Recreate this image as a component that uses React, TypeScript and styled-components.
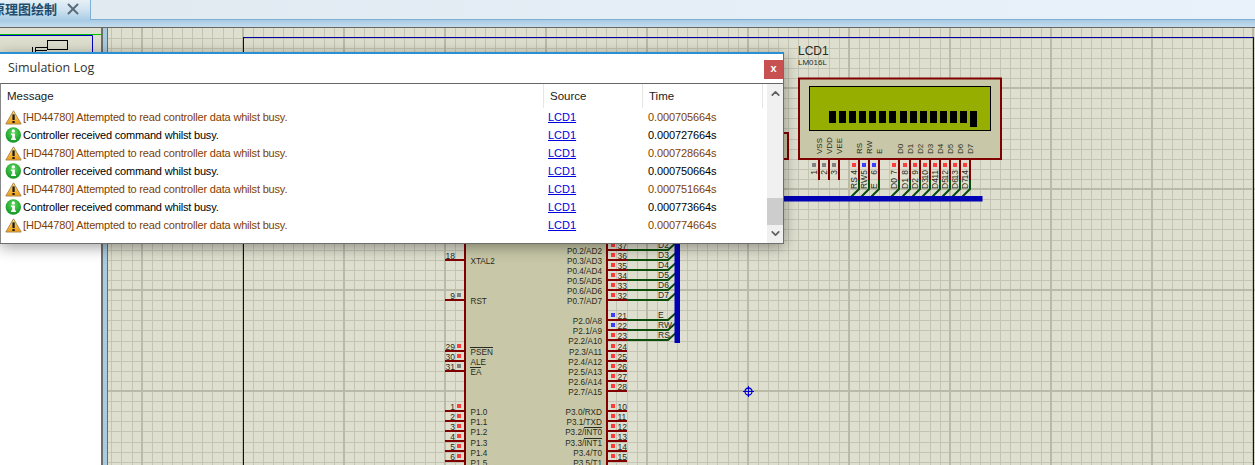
import React from "react";
import styled, { createGlobalStyle } from "styled-components";
import { ChevronDown, ChevronUp, X } from "lucide-react";

const Global = createGlobalStyle`
  html, body { margin: 0; padding: 0; background: #fff; overflow: hidden; }
  * { box-sizing: border-box; }
`;

const Root = styled.div`
  position: relative;
  width: 1255px;
  height: 465px;
  overflow: hidden;
  display: flex;
  flex-direction: column;
  font-family: "Liberation Sans", Arial, sans-serif;
`;

const TabBar = styled.div`
  display: flex;
  height: 20px;
  flex: none;
`;

const ActiveTab = styled.div`
  width: 91px;
  display: flex;
  align-items: center;
  overflow: hidden;
  background: linear-gradient(#e6f0f7, #cfe2f0 50%, #a9cde6);
  border-right: 1px solid #7fb0d4;
`;

const TabTitle = styled.span`
  flex: none;
  margin-left: -8px;
  margin-top: -3px;
  width: 65px;
  font: bold 13px "Noto Sans CJK SC", sans-serif;
  color: #1f4d70;
  white-space: nowrap;
`;

const TabClose = styled.span`
  display: flex;
  margin-left: 7px;
  margin-top: -2px;
  color: #5b6b78;
`;

const TabFill = styled.div`
  flex: 1;
  background: linear-gradient(90deg, #e1e9f1, #e9f2fa);
  border-bottom: 1px solid #7fb0d4;
`;

const Strip = styled.div`
  height: 7px;
  flex: none;
  background: linear-gradient(#a6cae4, #c6dcec);
`;

const Workspace = styled.div`
  flex: 1;
  display: flex;
  min-height: 0;
  border-top: 1px solid #666;
`;

const SidePanel = styled.div`
  width: 103px;
  flex: none;
  background: #fff;
  border-right: 2px solid #6e6e6e;
`;

const Preview = styled.svg`
  display: block;
  width: 101px;
  height: 26px;
  background: #dfdfcf;
`;

const Splitter = styled.div`
  width: 5px;
  flex: none;
  background: #a9cbe0;
  border-right: 1px solid #6e6e6e;
`;

const Canvas = styled.svg`
  flex: 1;
  display: block;
  height: 437px;
  background: #dfdfcf;
`;

const SheetText = styled.text<{ $size?: number; $fill?: string; $anchor?: string }>`
  font-family: "Liberation Sans", Arial, sans-serif;
  font-size: ${(p) => p.$size ?? 8.2}px;
  fill: ${(p) => p.$fill ?? "#2a2a20"};
  text-anchor: ${(p) => p.$anchor ?? "start"};
`;

const Dialog = styled.div`
  position: absolute;
  left: 0;
  top: 52px;
  width: 784px;
  height: 192px;
  background: #fff;
  border-top: 2px solid #2b8fd3;
  border-right: 1px solid #6e6e6e;
  border-bottom: 1px solid #6e6e6e;
  box-shadow: 0 3px 14px rgba(0, 0, 0, 0.38);
  display: flex;
  flex-direction: column;
`;

const TitleBar = styled.div`
  height: 29px;
  flex: none;
  display: flex;
  align-items: center;
  justify-content: space-between;
  padding-left: 8px;
`;

const Title = styled.span`
  margin-bottom: 3px;
  font: 12.5px "Open Sans", sans-serif;
  color: #333;
`;

const CloseButton = styled.button`
  align-self: flex-start;
  width: 19px;
  height: 19px;
  margin-top: 6px;
  border: 0;
  padding: 0 0 3px;
  background: #c75050;
  color: #fff;
  font: bold 11px "Liberation Sans", sans-serif;
`;

const ListBox = styled.div`
  flex: 1;
  display: flex;
  min-height: 0;
  border-top: 1px solid #666;
  border-left: 1px solid #888;
`;

const ListMain = styled.div`
  width: 765px;
  flex: none;
`;

const Columns = styled.div`
  display: grid;
  grid-template-columns: 543px 99px 120px;
`;

const HeaderRow = styled(Columns)`
  height: 24px;
`;

const HeaderCell = styled.div`
  padding-left: 6px;
  line-height: 24px;
  font-size: 11.5px;
  color: #1a1a1a;
  border-right: 1px solid #e6e6e6;
`;

const Row = styled(Columns)<{ $warn: boolean }>`
  height: 18px;
  line-height: 18px;
  font-size: 11px;
  color: ${(p) => (p.$warn ? "#7f4000" : "#000")};
`;

const MessageCell = styled.div`
  display: flex;
  align-items: center;
  gap: 1px;
  padding-left: 4px;
  white-space: nowrap;
  letter-spacing: -0.18px;
`;

const SourceLink = styled.a`
  padding-left: 4px;
  color: #0000e0;
  text-decoration: underline;
`;

const TimeCell = styled.div`
  padding-left: 5px;
  letter-spacing: -0.12px;
`;

const Scrollbar = styled.div`
  width: 16px;
  margin-left: 1px;
  background: #f0f0f0;
  display: flex;
  flex-direction: column;
  align-items: center;
  justify-content: space-between;
  position: relative;
  padding: 3px 0;
  color: #606060;
`;

const Thumb = styled.div`
  position: absolute;
  left: 0;
  right: 0;
  top: 114px;
  height: 27px;
  background: #cdcdcd;
`;

const WarnIcon = () => (
  <svg width="17" height="15" viewBox="0 0 17 15">
    <defs>
      <linearGradient id="warnFill" x1="0" y1="0" x2="0" y2="1">
        <stop offset="0" stopColor="#ffe27a" />
        <stop offset="1" stopColor="#f09a10" />
      </linearGradient>
    </defs>
    <path d="M8.5 0.8 L16.2 14 H0.8 Z" fill="url(#warnFill)" stroke="#b08a50" strokeLinejoin="round" />
    <rect x="7.4" y="4.4" width="2.3" height="5.6" fill="#1a1a1a" />
    <rect x="7.4" y="11" width="2.3" height="2" fill="#1a1a1a" />
  </svg>
);

const InfoIcon = () => (
  <svg width="17" height="16" viewBox="0 0 17 16">
    <defs>
      <radialGradient id="infoFill" cx="0.5" cy="0.35" r="0.7">
        <stop offset="0" stopColor="#5fdc5f" />
        <stop offset="1" stopColor="#0a8f1e" />
      </radialGradient>
    </defs>
    <circle cx="8.3" cy="8" r="7.7" fill="url(#infoFill)" />
    <circle cx="8.3" cy="3.9" r="1.7" fill="#fff" />
    <path d="M6 6.5 H9.9 V11.6 H11 V13 H6 V11.6 H7.2 V7.9 H6 Z" fill="#fff" />
  </svg>
);

const logRows = [
  [true, "0.000705664s"],
  [false, "0.000727664s"],
  [true, "0.000728664s"],
  [false, "0.000750664s"],
  [true, "0.000751664s"],
  [false, "0.000773664s"],
  [true, "0.000774664s"],
] as const;

const range = (from: number, to: number, step: number) => {
  const out: number[] = [];
  for (let v = from; v <= to; v += step) out.push(v);
  return out;
};

const GRID = "#c4c4b4";
const GRID_MAJOR = "#babaa9";
const PIN = "#800000";
const WIRE = "#0a4d0a";
const BUS = "#0000b4";
const RED = "#ff3c3c";
const BLUE = "#3c3cff";
const GRAY = "#808080";

const xMinor = range(0, 113, 1).map((k) => Math.round(141.7 + (k - 3) * 10.1));
const yMinor = range(0, 43, 1).map((k) => Math.round(37.5 + (k - 1) * 10.1));
const xMajor = [0, 1, 2, 3, 4, 5, 6, 7, 8, 9, 10, 11].map((k) => Math.round(141.7 + k * 101));
const yMajor = [0, 1, 2, 3, 4].map((k) => Math.round(88 + k * 101));

const Grid = () => (
  <g shapeRendering="crispEdges">
    {xMinor.map((x) => (
      <line key={x} x1={x + 0.5} x2={x + 0.5} y1={28} y2={465} stroke={GRID} />
    ))}
    {yMinor.map((y) => (
      <line key={y} y1={y + 0.5} y2={y + 0.5} x1={108} x2={1255} stroke={GRID} />
    ))}
    {xMajor.map((x) => (
      <line key={x} x1={x} x2={x} y1={28} y2={465} stroke={GRID_MAJOR} strokeWidth={2} />
    ))}
    {yMajor.map((y) => (
      <line key={y} y1={y} y2={y} x1={108} x2={1255} stroke={GRID_MAJOR} strokeWidth={2} />
    ))}
  </g>
);

const Marker = ({ x, y, c }: { x: number; y: number; c: string }) => (
  <rect x={x} y={y} width={4} height={4} fill={c} shapeRendering="crispEdges" />
);

const lcdBlocks = [829, 839, 849, 859, 869, 879, 889, 900, 910, 920, 930, 940, 950, 960, 970];
const lcdLabels: [string, number][] = [
  ["VSS", 822], ["VDD", 832], ["VEE", 842], ["RS", 862], ["RW", 872], ["E", 882],
  ["D0", 903], ["D1", 913], ["D2", 923], ["D3", 933], ["D4", 943], ["D5", 953], ["D6", 963], ["D7", 973],
];
const lcdPower: [number, string][] = [[819, "1"], [829, "2"], [839, "3"]];
const lcdPins: [number, string, string, string][] = [
  [859, "4", "RS", RED], [869, "5", "RW", BLUE], [879, "6", "E", BLUE],
  [899, "7", "D0", RED], [910, "8", "D1", RED], [920, "9", "D2", RED], [930, "10", "D3", RED],
  [940, "11", "D4", RED], [950, "12", "D5", RED], [960, "13", "D6", RED], [970, "14", "D7", RED],
];

const Lcd = () => (
  <g>
    <rect x={700} y={133} width={88} height={26} fill="#c8c8a8" stroke={PIN} strokeWidth={2} />
    <SheetText x={798} y={55} $size={12}>LCD1</SheetText>
    <SheetText x={798} y={65} $size={8}>LM016L</SheetText>
    {lcdPower.map(([x, n]) => (
      <g key={n}>
        <line x1={x} x2={x} y1={159} y2={180} stroke={PIN} strokeWidth={2} />
        <Marker x={x - 7} y={163} c={GRAY} />
        <SheetText $size={8.5} transform={`rotate(-90 ${x - 2} 170)`} x={x - 2} y={170} $anchor="end">{n}</SheetText>
      </g>
    ))}
    {lcdPins.map(([x, n, label, c]) => (
      <g key={n}>
        <line x1={x} x2={x} y1={159} y2={180} stroke={PIN} strokeWidth={2} />
        <path d={`M${x} 180 V189 L${x - 10} 199`} fill="none" stroke={WIRE} strokeWidth={2} />
        <Marker x={x - 7} y={163} c={c} />
        <SheetText $size={8.5} transform={`rotate(-90 ${x - 2} 170)`} x={x - 2} y={170} $anchor="end">{n}</SheetText>
        <SheetText $size={8.5} transform={`rotate(-90 ${x - 2} 189)`} x={x - 2} y={189}>{label}</SheetText>
      </g>
    ))}
    <rect x={799} y={78.5} width={202} height={80.5} fill="#c8c8a8" stroke={PIN} strokeWidth={2} />
    <rect x={809.5} y={86.5} width={181} height={44} fill="#95ae00" stroke="#000" />
    {lcdBlocks.map((x, i) => (
      <rect key={x} x={x} y={111} width={7} height={i === 14 ? 16 : 12} fill="#000" />
    ))}
    {lcdLabels.map(([t, x]) => (
      <SheetText key={t} $size={8} transform={`rotate(-90 ${x} 154)`} x={x} y={154}>{t}</SheetText>
    ))}
    <rect x={740} y={196} width={242.5} height={5.5} fill={BUS} />
  </g>
);

const leftPins: [number, string, string | null][] = [
  [260, "18", null], [300, "9", GRAY], [351, "29", RED], [361, "30", RED], [371, "31", GRAY],
  [411, "1", RED], [421, "2", RED], [431, "3", RED], [441, "4", RED], [451, "5", RED], [461, "6", RED],
];
const rightPins: [number, string, string][] = [
  [250, "37", RED], [260, "36", RED], [270, "35", RED], [280, "34", RED], [290, "33", RED], [300, "32", RED],
  [320, "21", BLUE], [330, "22", BLUE], [340, "23", RED],
  [351, "24", RED], [361, "25", RED], [371, "26", RED], [381, "27", RED], [391, "28", RED],
  [411, "10", RED], [421, "11", RED], [431, "12", RED], [441, "13", RED], [451, "14", RED], [461, "15", RED],
];
const wired = new Set(["37", "36", "35", "34", "33", "32", "21", "22", "23"]);
const wireLabels: [string, number][] = [
  ["D2", 248], ["D3", 258], ["D4", 268], ["D5", 278], ["D6", 288], ["D7", 298], ["E", 318], ["RW", 328], ["RS", 338],
];
const leftNames: [string, number][] = [
  ["XTAL2", 264], ["RST", 304], ["PSEN", 355], ["ALE", 365], ["EA", 375],
  ["P1.0", 415], ["P1.1", 425], ["P1.2", 435], ["P1.3", 446], ["P1.4", 456], ["P1.5", 466],
];
const rightNames: [string, number][] = [
  ["P0.2/AD2", 254], ["P0.3/AD3", 264], ["P0.4/AD4", 274], ["P0.5/AD5", 284], ["P0.6/AD6", 294], ["P0.7/AD7", 304],
  ["P2.0/A8", 324], ["P2.1/A9", 334], ["P2.2/A10", 344], ["P2.3/A11", 355], ["P2.4/A12", 365], ["P2.5/A13", 375],
  ["P2.6/A14", 385], ["P2.7/A15", 395], ["P3.0/RXD", 415], ["P3.1/TXD", 425], ["P3.2/INT0", 435], ["P3.3/INT1", 446],
  ["P3.4/T0", 456], ["P3.5/T1", 466],
];

const Mcu = () => (
  <g>
    <rect x={465} y={230} width={142} height={240} fill="#c8c8a8" stroke={PIN} strokeWidth={2} />
    {leftPins.map(([y, n, c]) => (
      <g key={n}>
        <line x1={445} x2={465} y1={y} y2={y} stroke={PIN} strokeWidth={2} />
        {c && <Marker x={457} y={y - 7} c={c} />}
        <SheetText $size={8.5} $anchor="end" x={455} y={y - 1.5}>{n}</SheetText>
      </g>
    ))}
    {rightPins.map(([y, n, c]) => (
      <g key={n}>
        <line x1={607} x2={627} y1={y} y2={y} stroke={PIN} strokeWidth={2} />
        {wired.has(n) && (
          <path d={`M627 ${y} H668 L678 ${y - 9}`} fill="none" stroke={WIRE} strokeWidth={2} />
        )}
        <Marker x={611} y={y - 7} c={c} />
        <SheetText $size={8.5} x={617.5} y={y - 1.5}>{n}</SheetText>
      </g>
    ))}
    <rect x={674.5} y={190} width={5.5} height={153} fill={BUS} />
    {wireLabels.map(([t, y]) => (
      <SheetText key={t} $size={8.5} x={658} y={y}>{t}</SheetText>
    ))}
    {leftNames.map(([t, y]) => (
      <SheetText key={t} x={470.5} y={y}>{t}</SheetText>
    ))}
    {rightNames.map(([t, y]) => (
      <SheetText key={t} $anchor="end" x={602} y={y}>{t}</SheetText>
    ))}
    <g stroke="#2a2a20" strokeWidth={1} shapeRendering="crispEdges">
      <line x1={470} x2={493} y1={347.5} y2={347.5} />
      <line x1={470} x2={481} y1={367.5} y2={367.5} />
      <line x1={584} x2={602} y1={427.5} y2={427.5} />
      <line x1={584} x2={602} y1={438.5} y2={438.5} />
    </g>
  </g>
);

const Cursor = () => (
  <g stroke="#0000d0" fill="none" strokeWidth={1}>
    <circle cx={748.5} cy={391.5} r={3.5} strokeWidth={1.3} />
    <path d="M748.5 386 V397 M743 391.5 H754" />
  </g>
);

export default function App() {
  return (
    <Root>
      <Global />
      <TabBar>
        <ActiveTab>
          <TabTitle>原理图绘制</TabTitle>
          <TabClose><X size={18} strokeWidth={2.6} /></TabClose>
        </ActiveTab>
        <TabFill />
      </TabBar>
      <Strip />
      <Workspace>
        <SidePanel>
          <Preview viewBox="0 28 101 26">
            <line x1={0} x2={101} y1={34.5} y2={34.5} stroke="#00c000" />
            <path d="M0 35.5 H92.5 V54" fill="none" stroke="#0000c0" />
            <rect x={47.5} y={40.5} width={20} height={9} fill="none" stroke="#000" />
            <path d="M47 47.5 H35.5 V54 M32.5 47 V54 M35.5 50.5 H47" fill="none" stroke="#000" />
          </Preview>
        </SidePanel>
        <Splitter />
        <Canvas viewBox="108 28 1147 437" preserveAspectRatio="xMinYMin">
          <Grid />
          <path d="M243.5 465 V37.5 H1253.5 V465" fill="none" stroke="#0000a0" shapeRendering="crispEdges" />
          <Mcu />
          <Lcd />
          <Cursor />
        </Canvas>
      </Workspace>
      <Dialog>
        <TitleBar>
          <Title>Simulation Log</Title>
          <CloseButton>x</CloseButton>
        </TitleBar>
        <ListBox>
          <ListMain>
            <HeaderRow>
              <HeaderCell>Message</HeaderCell>
              <HeaderCell>Source</HeaderCell>
              <HeaderCell>Time</HeaderCell>
            </HeaderRow>
            {logRows.map(([warn, time]) => (
              <Row key={time} $warn={warn}>
                <MessageCell>
                  {warn ? <WarnIcon /> : <InfoIcon />}
                  {warn
                    ? "[HD44780] Attempted to read controller data whilst busy."
                    : "Controller received command whilst busy."}
                </MessageCell>
                <div><SourceLink href="#">LCD1</SourceLink></div>
                <TimeCell>{time}</TimeCell>
              </Row>
            ))}
          </ListMain>
          <Scrollbar>
            <ChevronUp size={13} strokeWidth={3.2} />
            <Thumb />
            <ChevronDown size={13} strokeWidth={3.2} />
          </Scrollbar>
        </ListBox>
      </Dialog>
    </Root>
  );
}
